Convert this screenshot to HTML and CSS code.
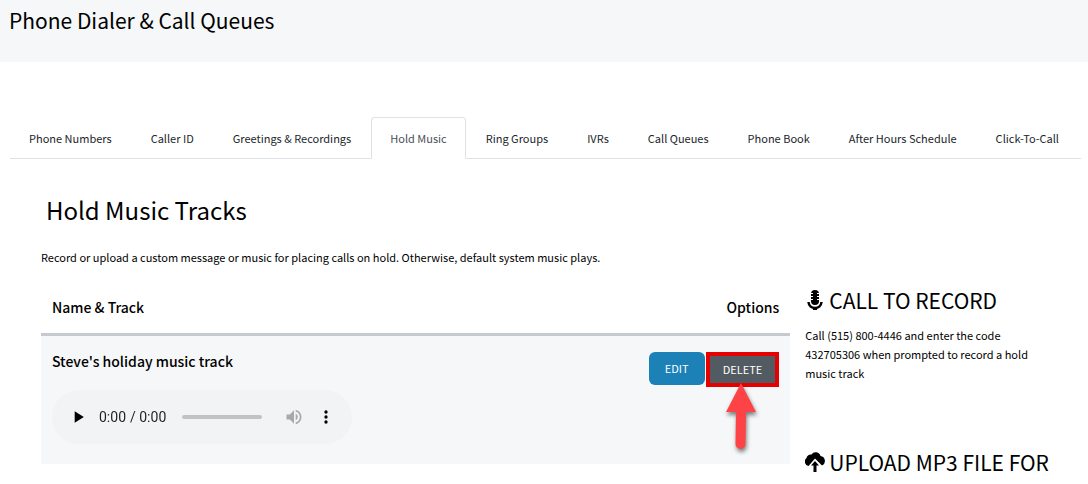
FILE: index.html
```
<!DOCTYPE html>
<html lang="en">
<head>
    <meta charset="UTF-8">
    <meta name="viewport" content="width=device-width, initial-scale=1.0">
    <title>Phone Dialer &amp; Call Queues</title>
    <link rel="stylesheet" href="styles.css">
</head>
<body>
    <header class="page-header">
        <h1>Phone Dialer &amp; Call Queues</h1>
    </header>

    <!-- Tabs -->
    <nav class="tabs">
        <a class="tab" href="#numbers">Phone Numbers</a>
        <a class="tab" href="#caller-id">Caller ID</a>
        <a class="tab" href="#greetings">Greetings &amp; Recordings</a>
        <a class="tab active" href="#hold-music" aria-current="page">Hold Music</a>
        <a class="tab" href="#ring-groups">Ring Groups</a>
        <a class="tab" href="#ivrs">IVRs</a>
        <a class="tab" href="#call-queues">Call Queues</a>
        <a class="tab" href="#phone-book">Phone Book</a>
        <a class="tab" href="#after-hours">After Hours Schedule</a>
        <a class="tab" href="#click-to-call">Click-To-Call</a>
    </nav>

    <main class="content">
        <h2>Hold Music Tracks</h2>
        <p class="intro">Record or upload a custom message or music for placing calls on hold. Otherwise, default system music plays.</p>

        <div class="columns">
            <table class="tracks">
                <thead>
                    <tr>
                        <th scope="col">Name &amp; Track</th>
                        <th scope="col" class="options">Options</th>
                    </tr>
                </thead>
                <tbody>
                    <tr>
                        <td>
                            <div class="track-name">Steve's holiday music track</div>
                            <audio class="player" controls preload="none" src="holiday.mp3"></audio>
                        </td>
                        <td class="options">
                            <div class="actions">
                                <button type="button" class="btn btn-edit">EDIT</button>
                                <div class="callout">
                                    <button type="button" class="btn btn-delete">DELETE</button>
                                    <svg class="arrow" width="40" height="74" viewBox="0 0 40 74" aria-hidden="true">
                                        <path d="M20 4 L35 33 H25 L24.500 65 A5 5 0 0 1 14.500 65 L15 33 H5 Z" fill="#fd4345"/>
                                    </svg>
                                </div>
                            </div>
                        </td>
                    </tr>
                </tbody>
            </table>

            <aside class="sidebar">
                <section>
                    <h3>
                        <svg class="icon" width="20" height="20" viewBox="0 0 20 20" aria-hidden="true">
                            <rect x="6" y="0" width="8" height="15" rx="4" fill="#000"/>
                            <path d="M5 3.500h3M5 6.500h3M5 9.500h3M12 3.500h3M12 6.500h3M12 9.500h3" stroke="#fff" stroke-width="1"/>
                            <path d="M3.500 12C4 20 16 20 16.500 12" fill="none" stroke="#000" stroke-width="2.500"/>
                            <path d="M8 17h4v3H8z" fill="#000"/>
                        </svg>
                        CALL TO RECORD
                    </h3>
                    <p>Call (515) 800-4446 and enter the code 432705306 when prompted to record a hold music track</p>
                </section>
                <section>
                    <h3>
                        <svg class="icon" width="20" height="20" viewBox="0 0 20 20" aria-hidden="true">
                            <path d="M3.500 14A4.500 4.500 0 0 1 1.500 6A4.200 4.200 0 0 1 6.500 2.500A5 5 0 0 1 15.500 4A5 5 0 0 1 17 13.500L10 6.500Z" fill="#000"/>
                            <path d="M10 9l4 4.500h-2.500V20h-3v-6.500H6z" fill="#000"/>
                        </svg>
                        UPLOAD MP3 FILE FOR
                    </h3>
                </section>
            </aside>
        </div>
    </main>
</body>
</html>
```
FILE: styles.css
```
* {
    box-sizing: border-box;
}

body {
    margin: 0;
    background-color: #fff;
    color: #000;
    font-family: "Noto Sans CJK SC", "Open Sans", sans-serif;
    font-size: 11px;
    line-height: 19px;
}

h1, h2, h3, p {
    margin: 0;
    font-weight: normal;
}

.page-header {
    background-color: #f5f7f9;
    padding: 5px 9px 27px;
}

.page-header h1 {
    font-size: 21px;
    line-height: 30px;
}

/* Tabs */
.tabs {
    display: flex;
    gap: 1px;
    margin: 55px 7px 0 10px;
    border-bottom: 1px solid #dee2e6;
}

.tab {
    padding: 11px 18px;
    margin-bottom: -1px;
    border: 1px solid transparent;
    border-radius: 4px 4px 0 0;
    color: #212529;
    line-height: 18px;
    text-decoration: none;
    white-space: nowrap;
}

.tab.active {
    background-color: #fff;
    border-color: #dee2e6;
    border-bottom-color: #fff;
    color: #495057;
}

/* Page content */
.content {
    padding: 32px 33px 0 41px;
}

.content h2 {
    padding-left: 5px;
    font-size: 24px;
    line-height: 38px;
}

.intro {
    margin-top: 19px;
}

.columns {
    display: grid;
    grid-template-columns: 3fr 1fr;
    align-items: start;
    gap: 15px;
    margin-top: 16px;
}

.tracks {
    width: 100%;
    border-collapse: collapse;
}

.tracks th {
    padding: 14px 11px 16px;
    border-bottom: 3px solid #c5cad0;
    font-size: 14px;
    font-weight: 500;
    line-height: 20px;
    text-align: left;
}

.tracks td {
    padding: 16px 11px 20px;
    background-color: #f5f7f9;
    vertical-align: top;
}

.tracks .options {
    text-align: right;
}

.track-name {
    font-size: 14px;
    font-weight: 500;
    line-height: 18px;
}

.player {
    display: block;
    width: 300px;
    height: 54px;
    margin-top: 20px;
}

.actions {
    display: flex;
    justify-content: flex-end;
    gap: 1px;
}

.btn {
    height: 33px;
    border: none;
    border-radius: 6px;
    color: #fff;
    font-family: inherit;
    font-size: 11px;
    cursor: pointer;
}

.btn-edit {
    padding: 0 16px 2px;
    background-color: #1b81b7;
}

/* Red frame and arrow around the delete button */
.callout {
    position: relative;
    border: 4px solid #e60000;
}

.btn-delete {
    display: block;
    height: 27px;
    padding: 0 13px 2px;
    border-radius: 0;
    background-color: #515b61;
}

.arrow {
    position: absolute;
    left: 11px;
    top: 23px;
    filter: drop-shadow(1px 3px 2px rgba(0, 0, 0, 0.5));
}

/* Sidebar */
.sidebar {
    display: grid;
    gap: 62px;
}

.sidebar h3 {
    display: flex;
    align-items: center;
    gap: 4px;
    font-size: 21px;
    line-height: 34px;
    white-space: nowrap;
}

.sidebar p {
    max-width: 240px;
    margin-top: 9px;
}

.icon {
    flex: none;
}
```
